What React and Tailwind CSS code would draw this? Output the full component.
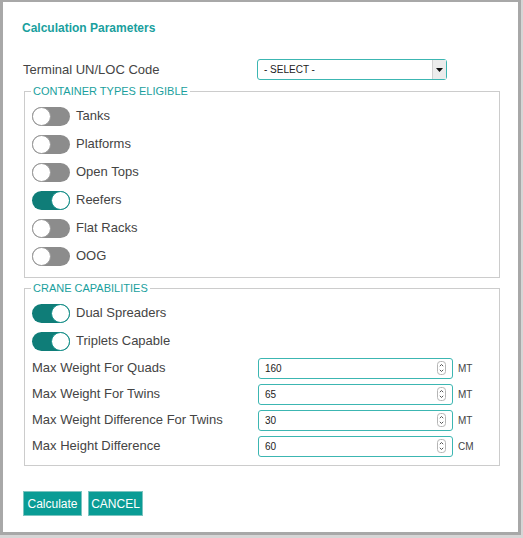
import React from 'react';

const CONTAINER_TYPES = [
  { label: 'Tanks', on: false },
  { label: 'Platforms', on: false },
  { label: 'Open Tops', on: false },
  { label: 'Reefers', on: true },
  { label: 'Flat Racks', on: false },
  { label: 'OOG', on: false },
];

const LIMITS = [
  { label: 'Max Weight For Quads', value: '160', unit: 'MT' },
  { label: 'Max Weight For Twins', value: '65', unit: 'MT' },
  { label: 'Max Weight Difference For Twins', value: '30', unit: 'MT' },
  { label: 'Max Height Difference', value: '60', unit: 'CM' },
];

function Toggle({ on }) {
  return (
    <div className={'relative w-[38px] h-[19px] rounded-full ' + (on ? 'bg-[#0f7d78]' : 'bg-[#8c8c8c]')}>
      <div
        className={
          'absolute top-0 w-[19px] h-[19px] rounded-full bg-white border ' +
          (on ? 'right-0 border-[#14908a]' : 'left-0 border-[#9a9a9a]')
        }
      />
    </div>
  );
}

function ToggleRow({ label, on }) {
  return (
    <div className="flex items-center h-[28px] pl-[7px]">
      <Toggle on={on} />
      <span className="ml-[6px] text-[13px] text-[#444]">{label}</span>
    </div>
  );
}

function Spinner() {
  return (
    <svg width="9" height="14" viewBox="0 0 9 14" className="mr-[6px]">
      <rect x="0.5" y="0.5" width="8" height="13" rx="3" fill="#fff" stroke="#b5b5b5" />
      <path d="M2.8 5.2 L4.5 3.5 L6.2 5.2" fill="none" stroke="#555" strokeWidth="1" />
      <path d="M2.8 8.8 L4.5 10.5 L6.2 8.8" fill="none" stroke="#555" strokeWidth="1" />
    </svg>
  );
}

function LimitRow({ label, value, unit }) {
  return (
    <div className="flex items-center h-[26px] pl-[7px]">
      <span className="w-[226px] text-[13px] text-[#444]">{label}</span>
      <div className="flex items-center justify-between w-[195px] h-[21px] border border-[#3cb6b2] rounded-[3px] bg-white">
        <span className="pl-[6px] text-[10px] text-[#222]">{value}</span>
        <Spinner />
      </div>
      <span className="ml-[5px] text-[10px] text-[#444]">{unit}</span>
    </div>
  );
}

export default function App() {
  return (
    <div className="w-[523px] h-[538px] bg-[#d6d6d6]" style={{ fontFamily: '"Liberation Sans", Arial, sans-serif' }}>
      <div className="w-[521px] h-[535px] bg-white border-l-[3px] border-t-2 border-r-[3px] border-b-[3px] border-[#a8a8a8] pl-[20px] pt-[18px]">
        <h1 className="text-[12px] leading-[16px] font-bold text-[#1a9f9e] -ml-[1px]">Calculation Parameters</h1>

        <div className="flex items-center h-[21px] mt-[23px]">
          <span className="w-[234px] text-[13px] text-[#444]">Terminal UN/LOC Code</span>
          <div className="flex items-center justify-between w-[190px] h-[21px] border border-[#3cb6b2] rounded-[3px] bg-white">
            <span className="pl-[6px] text-[10px] text-[#222]">- SELECT -</span>
            <div className="flex items-center justify-center w-[14px] h-full bg-[#ececec] border-l border-[#d0d0d0]">
              <svg width="7" height="4" viewBox="0 0 7 4">
                <path d="M0 0 L7 0 L3.5 4 Z" fill="#111" />
              </svg>
            </div>
          </div>
        </div>

        <fieldset className="mt-[5px] ml-[1px] w-[476px] border border-[#cccccc] pb-[7px]">
          <legend className="ml-[6px] px-[2px] text-[11px] leading-[13px] text-[#1a9f9e]">CONTAINER TYPES ELIGIBLE</legend>
          <div className="pt-[4px]">
            {CONTAINER_TYPES.map((t) => (
              <ToggleRow key={t.label} label={t.label} on={t.on} />
            ))}
          </div>
        </fieldset>

        <fieldset className="mt-[4px] ml-[1px] w-[476px] border border-[#cccccc] pb-[6px]">
          <legend className="ml-[6px] px-[2px] text-[11px] leading-[13px] text-[#1a9f9e]">CRANE CAPABILITIES</legend>
          <div className="pt-[4px]">
            <ToggleRow label="Dual Spreaders" on />
            <ToggleRow label="Triplets Capable" on />
            {LIMITS.map((l) => (
              <LimitRow key={l.label} {...l} />
            ))}
          </div>
        </fieldset>

        <div className="flex gap-[6px] mt-[25px]">
          <button className="h-[25px] w-[59px] bg-[#0a9c95] border border-[#7cc4c0] text-white text-[12px]">Calculate</button>
          <button className="h-[25px] w-[55px] bg-[#0a9c95] border border-[#7cc4c0] text-white text-[12px]">CANCEL</button>
        </div>
      </div>
    </div>
  );
}
